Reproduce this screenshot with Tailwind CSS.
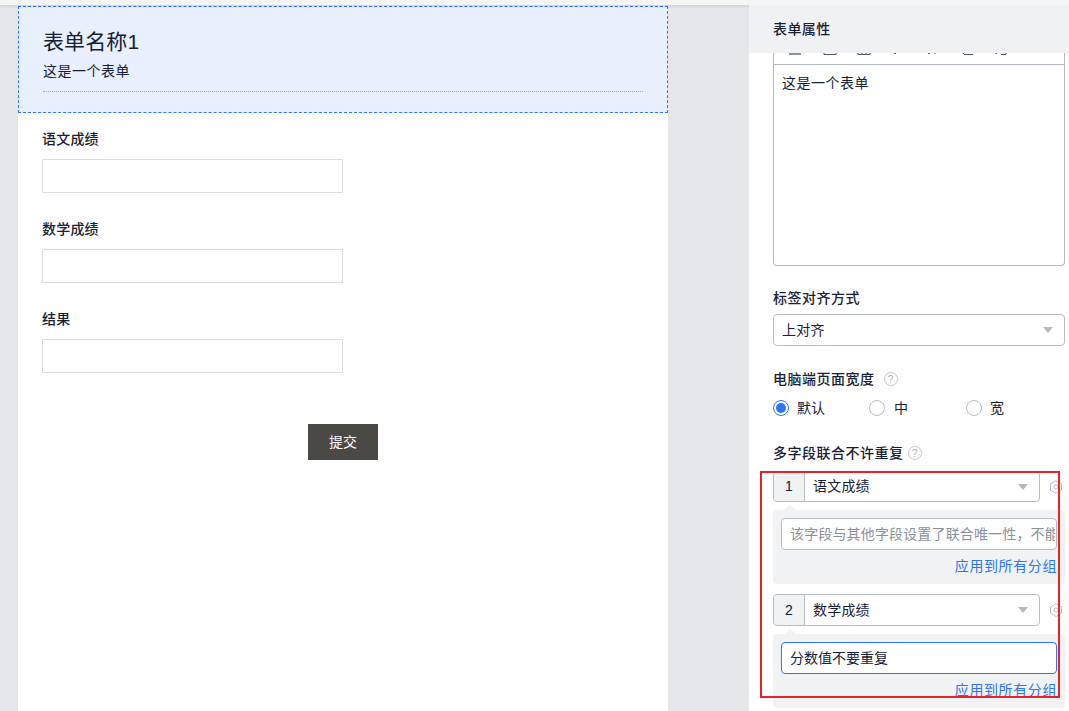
<!DOCTYPE html>
<html lang="zh-CN">
<head>
    <meta charset="UTF-8">
    <title>表单属性</title>
    <script src="https://cdn.jsdelivr.net/npm/@tailwindcss/browser@4"></script>
</head>
<body class="h-screen overflow-hidden bg-[#e5e6ea] text-[#172033] font-['Liberation_Sans','Noto_Sans_CJK_SC',sans-serif]">
    <!-- Top bar -->
    <div class="h-[5px] bg-[#f5f5f6] shadow-[0_1px_3px_rgba(0,0,0,0.12)] relative z-10"></div>

    <div class="flex h-[706px]">
        <!-- Form preview -->
        <div class="ml-[18px] mt-px w-[650px] bg-white">
            <div class="h-[107px] border border-dashed border-[#2f74f5] bg-[#e8f0fe] px-[24px] pt-[21px]">
                <h1 class="text-[21px] leading-[28px] tracking-[0.1px]">表单名称1</h1>
                <p class="mt-[5px] text-[14px] leading-[20px] tracking-[0.5px]">这是一个表单</p>
                <div class="mt-[10px] border-b border-dotted border-[#a9abb3]"></div>
            </div>
            <div class="pl-[24px] pt-[16px]">
                <div class="h-[90px]">
                    <div class="text-[14px] leading-[20px] font-medium tracking-[0.2px]">语文成绩</div>
                    <div class="mt-[10px] h-[34px] w-[301px] border border-[#dcdcdc]"></div>
                </div>
                <div class="h-[90px]">
                    <div class="text-[14px] leading-[20px] font-medium tracking-[0.2px]">数学成绩</div>
                    <div class="mt-[10px] h-[34px] w-[301px] border border-[#dcdcdc]"></div>
                </div>
                <div class="h-[90px]">
                    <div class="text-[14px] leading-[20px] font-medium tracking-[0.2px]">结果</div>
                    <div class="mt-[10px] h-[34px] w-[301px] border border-[#dcdcdc]"></div>
                </div>
            </div>
            <div class="ml-[290px] mt-[25px] flex h-[36px] w-[70px] items-center justify-center bg-[#4b4946] text-[14px] text-white">提交</div>
        </div>

        <!-- Properties panel -->
        <div class="relative ml-[81px] w-[320px] overflow-hidden bg-white">
            <div class="relative z-10 flex h-[48px] items-center bg-[#f0f1f3] pl-[24px] text-[14px] font-medium tracking-[0.4px]">表单属性</div>

            <div class="pl-[24px] pr-[4px]">
                <!-- Rich text editor, scrolled so only the toolbar's bottom shows -->
                <div class="h-[213px] rounded-b-[4px] border border-t-0 border-[#b3b8c3]">
                    <div class="flex h-[12px] items-end overflow-hidden border-b border-[#b3b8c3] pb-[8px] pl-[13px] text-[#4b5563]">
                        <svg class="h-[16px] w-[16px] shrink-0" viewBox="0 0 16 16" fill="none" stroke="currentColor"><path d="M2 8h12M2 14h12" stroke="#8d93a0" stroke-width="2"/></svg>
                        <svg class="ml-[19px] h-[16px] w-[16px] shrink-0" viewBox="0 0 16 16" fill="none" stroke="currentColor"><path d="M2 4v10.5h12V4"/></svg>
                        <svg class="ml-[18px] h-[16px] w-[16px] shrink-0" viewBox="0 0 16 16" fill="none" stroke="currentColor"><path d="M2 4v10.500h12V4M6 4v10M10 4v10"/></svg>
                        <svg class="ml-[18px] h-[16px] w-[10px] shrink-0" viewBox="0 0 10 16" fill="none" stroke="currentColor"><path d="M2 10l3 4 3-4"/></svg>
                        <svg class="ml-[24px] h-[16px] w-[14px] shrink-0" viewBox="0 0 14 16" fill="none" stroke="currentColor"><path d="M2 10l3 4 2-3M10 13h2"/></svg>
                        <svg class="ml-[21px] h-[16px] w-[16px] shrink-0" viewBox="0 0 16 16" fill="none" stroke="currentColor"><path d="M2 10l3 4.500h9"/></svg>
                        <svg class="ml-[17px] h-[16px] w-[16px] shrink-0" viewBox="0 0 16 16" fill="none" stroke="currentColor"><path d="M2 12l3 2M9 14.500h5V10"/></svg>
                    </div>
                    <div class="pl-[8px] pt-[8px] text-[14px] leading-[20px] tracking-[0.5px]">这是一个表单</div>
                </div>

                <!-- Label alignment -->
                <div class="mt-[22px] text-[14px] leading-[20px] font-medium tracking-[0.5px]">标签对齐方式</div>
                <div class="mt-[6px] flex h-[32px] items-center justify-between rounded-[4px] border border-[#b8bcc6] pl-[8px] pr-[11px] text-[14px]">
                    <span class="tracking-[0.3px]">上对齐</span>
                    <svg class="h-[6px] w-[10px]" viewBox="0 0 10 6"><path d="M0 0h10L5 6z" fill="#b4b8c2"/></svg>
                </div>

                <!-- Page width -->
                <div class="mt-[23px] flex h-[20px] items-center text-[14px] font-medium tracking-[0.5px]">
                    电脑端页面宽度
                    <span class="ml-[9px] flex h-[14px] w-[14px] items-center justify-center rounded-full border border-[#c5c8cf] text-[11px] font-normal tracking-normal text-[#b0b4bc]">?</span>
                </div>
                <div class="mt-[9px] flex h-[20px] items-center text-[14px]">
                    <span class="flex h-[16px] w-[16px] items-center justify-center rounded-full border border-[#2f74f5]"><span class="h-[10px] w-[10px] rounded-full bg-[#2f74f5]"></span></span>
                    <span class="ml-[8px] w-[72px]">默认</span>
                    <span class="h-[16px] w-[16px] rounded-full border border-[#b8bcc6]"></span>
                    <span class="ml-[9px] w-[72px]">中</span>
                    <span class="h-[16px] w-[16px] rounded-full border border-[#b8bcc6]"></span>
                    <span class="ml-[8px]">宽</span>
                </div>

                <!-- Unique field groups -->
                <div class="mt-[25px] flex h-[20px] items-center text-[14px] font-medium tracking-[0.5px]">
                    多字段联合不许重复
                    <span class="ml-[4px] flex h-[14px] w-[14px] items-center justify-center rounded-full border border-[#c5c8cf] text-[11px] font-normal tracking-normal text-[#b0b4bc]">?</span>
                </div>

                <div class="mt-[8px] flex items-center">
                    <div class="flex h-[31px] w-[267px] items-center rounded-[4px] border border-[#b8bcc6] text-[14px]">
                        <span class="flex h-full w-[31px] items-center justify-center rounded-l-[4px] border-r border-[#b8bcc6] bg-[#f1f2f4]">1</span>
                        <span class="ml-[8px] flex-1 tracking-[0.2px]">语文成绩</span>
                        <svg class="mr-[11px] h-[6px] w-[10px]" viewBox="0 0 10 6"><path d="M0 0h10L5 6z" fill="#b4b8c2"/></svg>
                    </div>
                    <svg class="ml-[9px] h-[16px] w-[14px]" viewBox="0 0 14 16" fill="none" stroke="#b8bcc6" stroke-linejoin="round"><path d="M7 1.500L9.700 3.320 12.630 4.750 12.400 8 12.630 11.250 9.700 12.680 7 14.500 4.300 12.680 1.370 11.250 1.600 8 1.370 4.750 4.300 3.320z"/><circle cx="7" cy="8" r="2"/></svg>
                </div>
                <div class="relative mt-[8px] h-[74px] rounded-[4px] bg-[#f1f2f4] pl-[8px] pt-[8px]">
                    <span class="absolute -top-[4px] left-[13px] h-[8px] w-[8px] rotate-45 bg-[#f1f2f4]"></span>
                    <div class="flex h-[32px] w-[276px] items-center overflow-hidden whitespace-nowrap rounded-[4px] border border-[#b8bcc6] bg-white pl-[8px] pr-px text-[14px] tracking-[0.15px] text-[#8a8f9a]">
                        <span class="block min-w-0 flex-1 overflow-hidden">该字段与其他字段设置了联合唯一性，不能重复</span>
                    </div>
                    <div class="mt-[6px] w-[276px] text-right text-[14px] leading-[20px] tracking-[0.6px] text-[#2f74f5]">应用到所有分组</div>
                </div>

                <div class="mt-[10px] flex items-center">
                    <div class="flex h-[32px] w-[267px] items-center rounded-[4px] border border-[#b8bcc6] text-[14px]">
                        <span class="flex h-full w-[31px] items-center justify-center rounded-l-[4px] border-r border-[#b8bcc6] bg-[#f1f2f4]">2</span>
                        <span class="ml-[8px] flex-1 tracking-[0.2px]">数学成绩</span>
                        <svg class="mr-[11px] h-[6px] w-[10px]" viewBox="0 0 10 6"><path d="M0 0h10L5 6z" fill="#b4b8c2"/></svg>
                    </div>
                    <svg class="ml-[9px] h-[16px] w-[14px]" viewBox="0 0 14 16" fill="none" stroke="#b8bcc6" stroke-linejoin="round"><path d="M7 1.500L9.700 3.320 12.630 4.750 12.400 8 12.630 11.250 9.700 12.680 7 14.500 4.300 12.680 1.370 11.250 1.600 8 1.370 4.750 4.300 3.320z"/><circle cx="7" cy="8" r="2"/></svg>
                </div>
                <div class="relative mt-[8px] h-[74px] rounded-[4px] bg-[#f1f2f4] pl-[8px] pt-[8px]">
                    <span class="absolute -top-[4px] left-[13px] h-[8px] w-[8px] rotate-45 bg-[#f1f2f4]"></span>
                    <div class="flex h-[32px] w-[276px] items-center rounded-[4px] border border-[#2f74f5] bg-white pl-[8px] text-[14px]">分数值不要重复</div>
                    <div class="mt-[6px] w-[276px] text-right text-[14px] leading-[20px] tracking-[0.6px] text-[#2f74f5]">应用到所有分组</div>
                </div>
            </div>

            <!-- Red annotation box -->
            <div class="absolute left-[11px] top-[466px] h-[227px] w-[300px] border-2 border-[#e8212a]"></div>
        </div>
    </div>
</body>
</html>
